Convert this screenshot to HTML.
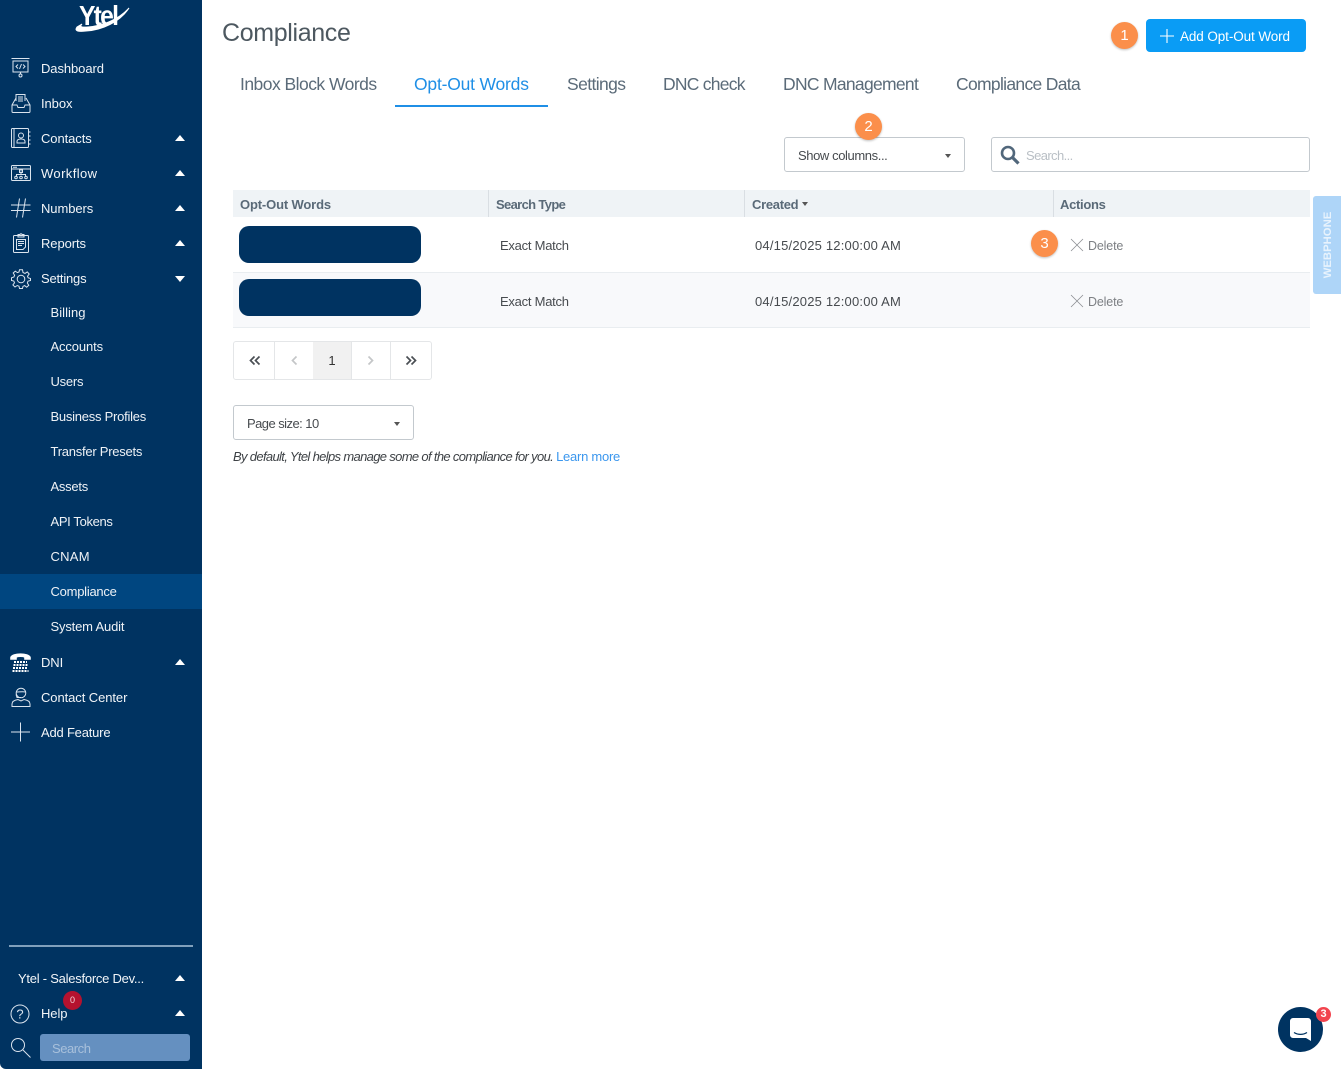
<!DOCTYPE html>
<html><head><meta charset="utf-8"><title>Compliance</title>
<style>
html,body{margin:0;padding:0;background:#fff}
body{width:1341px;height:1069px;position:relative;overflow:hidden;font-family:"Liberation Sans",sans-serif;color:#4a4f54}
.a{position:absolute;white-space:nowrap}
#side{position:absolute;left:0;top:0;width:202px;height:1069px;background:#003361;overflow:hidden;border-bottom-left-radius:6px}
.n{position:absolute;left:41px;color:#f2f5f8;font-size:13px;letter-spacing:-.08px;line-height:16px;white-space:nowrap}
.s{position:absolute;left:50.5px;color:#eef2f6;font-size:13px;letter-spacing:-.25px;line-height:16px;white-space:nowrap}
.up,.dn{position:absolute;left:175px;width:0;height:0;border-left:5.5px solid transparent;border-right:5.5px solid transparent}
.up{border-bottom:6px solid #fff}.dn{border-top:6px solid #fff}
#side svg{position:absolute;fill:none;stroke:#dbe4ee;stroke-width:1}
.tab{position:absolute;top:74px;font-size:17.5px;line-height:20px;color:#5b6b79;white-space:nowrap}
.th{position:absolute;top:197px;font-size:13px;font-weight:bold;letter-spacing:-.3px;line-height:15px;color:#5a6a78;white-space:nowrap}
.td{position:absolute;font-size:13px;letter-spacing:-.25px;line-height:16px;color:#474b4f;white-space:nowrap}
.sep{position:absolute;top:190px;width:1px;height:27px;background:#d9dee3}
.badge{position:absolute;width:27px;height:27px;border-radius:50%;background:#fb8f4b;color:#fff;font-size:15px;text-align:center;line-height:27px;box-shadow:0 1px 2px rgba(0,0,0,.25)}
.red{position:absolute;left:239px;width:182px;height:37px;background:#003361;border-radius:10px}
.del{position:absolute;left:1088px;font-size:12.5px;letter-spacing:-.15px;line-height:16px;color:#7d8084}
.pg{position:absolute;top:342px;height:37px;line-height:38px;text-align:center;border-right:1px solid #e4e6e8;font-size:13px;color:#333}
.box{position:absolute;background:#fff;border:1.5px solid #c3c9ce;border-radius:3px;box-sizing:border-box}
.car{position:absolute;width:0;height:0;border-left:3.5px solid transparent;border-right:3.5px solid transparent;border-top:4px solid #555}
</style></head><body>
<div id="side">
<div class="a" style="left:79px;top:2px;color:#fff;font-size:28px;font-weight:bold;letter-spacing:-2px;line-height:28px;transform:scaleX(.88);transform-origin:left">Ytel</div>
<svg style="left:74px;top:0" width="56" height="34" viewBox="0 0 56 34"><path d="M3 27C0 31 4 32 12 31C28 30 46 22 55 8C44 20 28 26 14 27C8 27.500 5 27 8 24Z" fill="#fff" stroke="#fff"/></svg>

<svg style="left:11px;top:58px" width="19" height="20" viewBox="0 0 19 20"><path d="M0.500 .5H18.500M1.500 3H17.500M2 3V14H17V3M9.500 14V16"/><circle cx="9.500" cy="17.500" r="1.500"/><path d="M7 6.500L5 8.500L7 10.500M12 6.500L14 8.500L12 10.500M10.500 6L8.500 11"/></svg>
<div class="n" style="top:61px">Dashboard</div>
<svg style="left:11px;top:94px" width="20" height="19" viewBox="0 0 20 19"><path d="M5 7V.5H14V7M7 3H12M7 5H12M7 7H12"/><path d="M5 4L1 11V17.500C1 18 1.500 18.500 2 18.500H18C18.500 18.500 19 18 19 17.500V11L15 4M1 11H6L7 13.500H13L14 11H19"/></svg>
<div class="n" style="top:96px">Inbox</div>
<svg style="left:11px;top:128px" width="20" height="20" viewBox="0 0 20 20"><rect x=".5" y=".5" width="17" height="19" rx="1"/><path d="M3 .5V19.500"/><circle cx="10" cy="7.500" r="2.500"/><path d="M6 15V13.500C6 11.500 8 11 10 11S14 11.500 14 13.500V15ZM18 4H19.500M18 8H19.500M18 12H19.500M18 16H19.500"/></svg>
<div class="n" style="top:131px">Contacts</div><div class="up" style="top:135px"></div>
<svg style="left:11px;top:165px" width="20" height="16" viewBox="0 0 20 16"><rect x=".5" y=".5" width="19" height="15" rx="1"/><path d="M.5 4H19.500M2 2.300H6M10 6H10.100M10 6.500V9M5.500 12V9.500H14.500V12"/><rect x="8.500" y="5" width="3" height="2.500"/><circle cx="5" cy="12.500" r="1.300"/><circle cx="10" cy="12.500" r="1.300"/><circle cx="15" cy="12.500" r="1.300"/></svg>
<div class="n" style="top:166px;letter-spacing:.4px">Workflow</div><div class="up" style="top:170px"></div>
<svg style="left:11px;top:198px" width="20" height="20" viewBox="0 0 20 20"><path d="M0 7H19.500M0 12.500H19.500M8.500 .5L5.500 19.500M14.500 .5L11.500 19.500"/></svg>
<div class="n" style="top:201px">Numbers</div><div class="up" style="top:205px"></div>
<svg style="left:13px;top:233px" width="16" height="20" viewBox="0 0 16 20"><rect x=".5" y="2.500" width="15" height="17" rx="1"/><path d="M5 4V1.500H7C7 .5 9 .5 9 1.500H11V4ZM3.500 6.500H12.500V14L10 16.500H3.500Z"/><path d="M5 8.500H11M5 10.500H11M5 12.500H9" stroke-width="1"/></svg>
<div class="n" style="top:236px">Reports</div><div class="up" style="top:240px"></div>
<svg style="left:11px;top:269px" width="20" height="20" viewBox="0 0 20 20"><circle cx="10" cy="10" r="3.800"/><path d="M8.500 .8H11.500L12 3.500L14 4.400L16.300 2.900L18.200 5L16.500 7.200L17.200 8.800L19.500 9.500V11.500L17 12.200L16.300 14L17.800 16.300L15.700 18.200L13.600 16.600L12 17.300L11.500 19.500H8.500L8 17.200L6.200 16.500L4 18L1.900 16L3.500 13.800L2.800 12L.5 11.500V8.800L2.900 8L3.600 6.300L2.200 4L4.300 2.100L6.400 3.600L8 3Z"/></svg>
<div class="n" style="top:271px;letter-spacing:-.2px">Settings</div><div class="dn" style="top:276px"></div>

<div class="s" style="top:305px;letter-spacing:.05px">Billing</div>
<div class="s" style="top:339px;letter-spacing:-.13px">Accounts</div>
<div class="s" style="top:374px">Users</div>
<div class="s" style="top:409px">Business Profiles</div>
<div class="s" style="top:444px">Transfer Presets</div>
<div class="s" style="top:479px">Assets</div>
<div class="s" style="top:514px;letter-spacing:-.35px">API Tokens</div>
<div class="s" style="top:549px;letter-spacing:.25px">CNAM</div>
<div class="a" style="left:0;top:574px;width:202px;height:35px;background:#004680"></div>
<div class="s" style="top:584px">Compliance</div>
<div class="s" style="top:619px;letter-spacing:-.17px">System Audit</div>

<svg style="left:10px;top:652px;stroke:#fff;stroke-width:1.6" width="21" height="20" viewBox="0 0 21 20"><path d="M1 5.500C2 1 19 1 20 5.500V7H15V5C13 4 8 4 6 5V7H1Z" fill="#fff"/><path d="M4 10H17M3.500 13H17.500M3 16H18M2.500 19H18.500" stroke-dasharray="2 1" stroke-width="2"/></svg>
<div class="n" style="top:655px">DNI</div><div class="up" style="top:659px"></div>
<svg style="left:11px;top:687px" width="20" height="20" viewBox="0 0 20 20"><circle cx="10" cy="6" r="4.800"/><path d="M5 5C8 5 12 4.500 15 5M1 19.500V17C1 14 4 13 7 12.500L10 14L13 12.500C16 13 19 14 19 17V19.500ZM5 7.500L6 10.500H10"/></svg>
<div class="n" style="top:690px">Contact Center</div>
<svg style="left:11px;top:722px" width="20" height="20" viewBox="0 0 20 20"><path d="M0 10H19M9.500 .5V19.500"/></svg>
<div class="n" style="top:725px;letter-spacing:-.2px">Add Feature</div>

<div class="a" style="left:9px;top:945px;width:184px;height:2px;background:#80a0bc"></div>
<div class="n" style="left:18px;top:971px;letter-spacing:-.25px">Ytel - Salesforce Dev...</div><div class="up" style="top:975px"></div>
<svg style="left:10px;top:1004px" width="20" height="20" viewBox="0 0 20 20"><circle cx="10" cy="10" r="9"/><text x="10" y="14.500" font-size="13" text-anchor="middle" fill="#dbe4ee" stroke="none" font-family="Liberation Sans">?</text></svg>
<div class="n" style="top:1006px;font-weight:500">Help</div><div class="up" style="top:1010px"></div>
<div class="a" style="left:63px;top:991px;width:19px;height:19px;border-radius:50%;background:#b5122f;color:#f4d5da;font-size:9px;line-height:19px;text-align:center">0</div>
<svg style="left:10px;top:1037px" width="21" height="21" viewBox="0 0 21 21"><circle cx="8" cy="8" r="6.500"/><path d="M13 13L20.500 20.500"/></svg>
<div class="a" style="left:40px;top:1034px;width:150px;height:27px;background:#6590c0;border-radius:3px;color:#a8c0db;font-size:13px;letter-spacing:-.45px;line-height:29px;text-indent:12px">Search</div>
</div>

<div class="a" style="left:222px;top:18px;font-size:25px;letter-spacing:-.35px;line-height:30px;color:#4d5860">Compliance</div>
<div class="badge" style="left:1111px;top:22px">1</div>
<div class="a" style="left:1146px;top:19px;width:160px;height:33px;background:#0a9cf5;border-radius:4px"></div>
<svg class="a" style="left:1160px;top:29px" width="14" height="14" viewBox="0 0 14 14"><path d="M0 7H14M7 0V14" stroke="#fff" stroke-width="1.100"/></svg>
<div class="a" style="left:1180px;top:29px;color:#fff;font-size:13.500px;letter-spacing:-.1px;line-height:16px">Add Opt-Out Word</div>

<div class="tab" style="left:240px;letter-spacing:-.53px">Inbox Block Words</div>
<div class="tab" style="left:414px;letter-spacing:-.2px;color:#1f8fe6">Opt-Out Words</div>
<div class="a" style="left:395px;top:105px;width:153px;height:2px;background:#1f8fe6"></div>
<div class="tab" style="left:567px;letter-spacing:-.6px">Settings</div>
<div class="tab" style="left:663px;letter-spacing:-.75px">DNC check</div>
<div class="tab" style="left:783px;letter-spacing:-.7px">DNC Management</div>
<div class="tab" style="left:956px;letter-spacing:-.68px">Compliance Data</div>

<div class="box" style="left:784px;top:137px;width:181px;height:35px"></div>
<div class="td" style="left:798px;top:148px;letter-spacing:-.4px">Show columns...</div>
<div class="car" style="left:945px;top:154px"></div>
<div class="badge" style="left:855px;top:113px;">2</div>
<div class="box" style="left:991px;top:137px;width:319px;height:35px"></div>
<svg class="a" style="left:1000px;top:145px" width="20" height="20" viewBox="0 0 20 20"><circle cx="8" cy="8" r="6" fill="none" stroke="#51677b" stroke-width="2.600"/><path d="M12.500 12.500L18.500 18.500" stroke="#51677b" stroke-width="3.200"/></svg>
<div class="a" style="left:1026px;top:148px;font-size:13px;letter-spacing:-.6px;line-height:16px;color:#b9bfc5">Search...</div>

<div class="a" style="left:233px;top:190px;width:1077px;height:27px;background:#eff3f6"></div>
<div class="sep" style="left:488px"></div><div class="sep" style="left:744px"></div><div class="sep" style="left:1053px"></div>
<div class="th" style="left:240px;letter-spacing:-.15px">Opt-Out Words</div>
<div class="th" style="left:496px;letter-spacing:-.65px">Search Type</div>
<div class="th" style="left:752px">Created</div>
<div class="car" style="left:802px;top:202px"></div>
<div class="th" style="left:1060px">Actions</div>

<div class="a" style="left:233px;top:272px;width:1077px;height:1px;background:#e9edf0"></div>
<div class="a" style="left:233px;top:273px;width:1077px;height:54px;background:#f8f9fb"></div>
<div class="a" style="left:233px;top:327px;width:1077px;height:1px;background:#e9edf0"></div>
<div class="red" style="top:226px"></div><div class="red" style="top:279px"></div>
<div class="td" style="left:500px;top:238px">Exact Match</div>
<div class="td" style="left:755px;top:238px;letter-spacing:.2px">04/15/2025 12:00:00 AM</div>
<div class="td" style="left:500px;top:294px">Exact Match</div>
<div class="td" style="left:755px;top:294px;letter-spacing:.2px">04/15/2025 12:00:00 AM</div>
<div class="badge" style="left:1031px;top:230px">3</div>
<svg class="a" style="left:1070px;top:238px" width="14" height="14" viewBox="0 0 14 14"><path d="M1 1L13 13M13 1L1 13" stroke="#8b8e92" stroke-width=".8"/></svg>
<div class="del" style="top:238px">Delete</div>
<svg class="a" style="left:1070px;top:294px" width="14" height="14" viewBox="0 0 14 14"><path d="M1 1L13 13M13 1L1 13" stroke="#8b8e92" stroke-width=".8"/></svg>
<div class="del" style="top:294px">Delete</div>

<div class="a" style="left:1313px;top:196px;width:28px;height:98px;background:#aed5f8;border-radius:3px 0 0 3px"></div>
<div class="a" style="left:1328px;top:245px;color:#e8f3fd;font-size:11.300px;font-weight:bold;line-height:14px;transform:translate(-50%,-50%) rotate(-90deg)">WEBPHONE</div>

<div class="a" style="left:233px;top:341px;width:199px;height:39px;border:1px solid #e4e6e8;border-radius:3px;box-sizing:border-box"></div>
<div class="pg" style="left:234px;width:40px"></div>
<div class="pg" style="left:275px;width:38px"></div>
<div class="pg" style="left:313px;width:38px;background:#f1f1f1">1</div>
<div class="pg" style="left:352px;width:38px"></div>
<div class="pg" style="left:391px;width:40px;border:0"></div>
<svg class="a" style="left:233px;top:341px" width="199" height="39" viewBox="0 0 199 39" fill="none" stroke-width="1.700"><path d="M21.500 15.500L17.500 19.500L21.500 23.500M26.500 15.500L22.500 19.500L26.500 23.500" stroke="#4a4f54"/><path d="M63.500 15.500L59.500 19.500L63.500 23.500" stroke="#c4c6c8"/><path d="M135.500 15.500L139.500 19.500L135.500 23.500" stroke="#c4c6c8"/><path d="M173.500 15.500L177.500 19.500L173.500 23.500M178.500 15.500L182.500 19.500L178.500 23.500" stroke="#4a4f54"/></svg>

<div class="box" style="left:233px;top:405px;width:181px;height:35px"></div>
<div class="td" style="left:247px;top:416px;letter-spacing:-.55px">Page size: 10</div>
<div class="car" style="left:394px;top:422px"></div>
<div class="a" style="left:233px;top:449px;font-size:13px;font-style:italic;letter-spacing:-.66px;line-height:16px;color:#3e4246">By default, Ytel helps manage some of the compliance for you. <span style="font-style:normal;color:#3b97ee;letter-spacing:-.25px">Learn more</span></div>

<div class="a" style="left:1278px;top:1007px;width:45px;height:45px;border-radius:50%;background:#003361"></div>
<svg class="a" style="left:1290px;top:1018px" width="21" height="23" viewBox="0 0 21 23"><path d="M3 0H18C19.500 0 21 1.500 21 3V23L16 20H3C1.500 20 0 18.500 0 17V3C0 1.500 1.500 0 3 0Z" fill="#fff"/><path d="M4 14.500C8 17 13 17 17 14.500" stroke="#003361" stroke-width="1.300" fill="none"/></svg>
<div class="a" style="left:1316px;top:1007px;width:15px;height:15px;border-radius:50%;background:#f2444e;color:#fff;font-size:11px;font-weight:bold;line-height:15px;text-align:center">3</div>
</body></html>
